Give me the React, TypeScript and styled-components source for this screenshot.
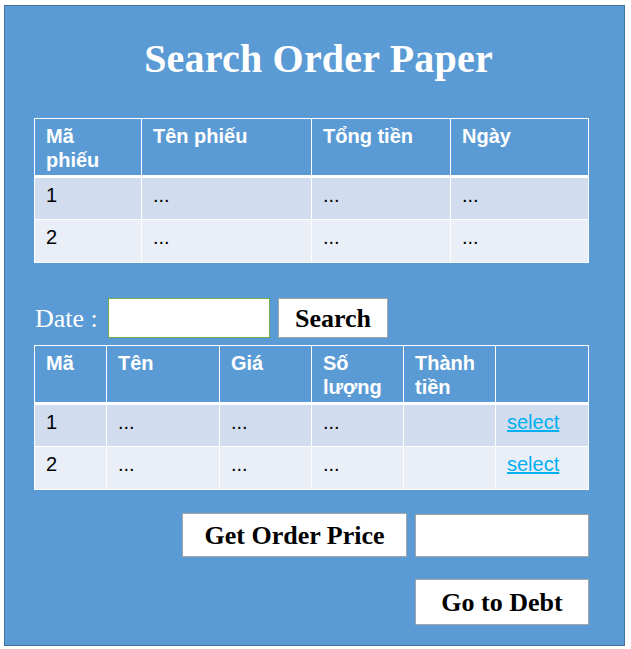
import React from "react";
import styled, { createGlobalStyle } from "styled-components";

const Global = createGlobalStyle`
  html, body { margin: 0; padding: 0; background: #ffffff; }
  * { box-sizing: border-box; }
`;

const Panel = styled.div`
  margin: 5px 0 0 4px;
  width: 621px;
  height: 641px;
  background: #5b9bd5;
  border: 1px solid #41719c;
  padding: 30px 0 0 29px;
  display: flex;
  flex-direction: column;
`;

const Title = styled.h1`
  margin: 0;
  width: 569px;
  height: 46px;
  line-height: 46px;
  text-align: center;
  font-family: "Liberation Serif", "Times New Roman", serif;
  font-weight: bold;
  font-size: 40px;
  letter-spacing: 0.2px;
  color: #ffffff;
`;

const Table = styled.div<{ $cols: string; $mt: number }>`
  margin-top: ${(p) => p.$mt}px;
  display: grid;
  grid-template-columns: ${(p) => p.$cols};
  grid-template-rows: 59px 42px 43px;
  width: 555px;
  border-top: 1px solid #ffffff;
  border-left: 1px solid #ffffff;
  font-family: "Liberation Sans", Arial, sans-serif;
  font-size: 20px;
  line-height: 24px;
`;

const HeadCell = styled.div`
  background: #5b9bd5;
  color: #ffffff;
  font-weight: bold;
  border-right: 1px solid #ffffff;
  border-bottom: 3px solid #ffffff;
  padding: 5px 8px 0 11px;
`;

const Cell = styled.div<{ $alt?: boolean }>`
  background: ${(p) => (p.$alt ? "#e9eef7" : "#d1dcee")};
  color: #000000;
  border-right: 1px solid #ffffff;
  border-bottom: 1px solid #ffffff;
  padding: 5px 8px 0 11px;
`;

const Link = styled.a`
  color: #00b0f0;
  text-decoration: underline;
  cursor: pointer;
`;

const DateRow = styled.div`
  margin-top: 35px;
  height: 40px;
  display: flex;
  align-items: center;
  gap: 8px;
`;

const Label = styled.span`
  font-family: "Liberation Serif", "Times New Roman", serif;
  font-size: 26px;
  color: #ffffff;
  margin-left: 1px;
  margin-top: 2px;
  width: 65px;
`;

const Field = styled.div<{ $w: number; $h: number; $green?: boolean }>`
  width: ${(p) => p.$w}px;
  height: ${(p) => p.$h}px;
  background: #ffffff;
  border: 1px solid ${(p) => (p.$green ? "#70ad47" : "#a5a5a5")};
`;

const Button = styled.button<{ $w: number; $h: number }>`
  width: ${(p) => p.$w}px;
  height: ${(p) => p.$h}px;
  background: #ffffff;
  border: 1px solid #a5a5a5;
  padding: 2px 0 0 0;
  font-family: "Liberation Serif", "Times New Roman", serif;
  font-weight: bold;
  font-size: 26px;
  color: #000000;
  display: flex;
  align-items: center;
  justify-content: center;
`;

const ActionRow = styled.div<{ $mt: number }>`
  margin-top: ${(p) => p.$mt}px;
  width: 555px;
  display: flex;
  justify-content: flex-end;
  align-items: flex-end;
  gap: 8px;
`;

const orders = [
  ["1", "...", "...", "..."],
  ["2", "...", "...", "..."],
];

const items = [
  ["1", "...", "...", "...", ""],
  ["2", "...", "...", "...", ""],
];

export default function App() {
  return (
    <>
      <Global />
      <Panel>
        <Title>Search Order Paper</Title>
        <Table $cols="107px 170px 139px 138px" $mt={36}>
          <HeadCell>Mã<br />phiếu</HeadCell>
          <HeadCell>Tên phiếu</HeadCell>
          <HeadCell>Tổng tiền</HeadCell>
          <HeadCell>Ngày</HeadCell>
          {orders.map((r, i) =>
            r.map((c, j) => (
              <Cell key={`${i}-${j}`} $alt={i === 1}>
                {c}
              </Cell>
            ))
          )}
        </Table>
        <DateRow>
          <Label>Date :</Label>
          <Field $w={162} $h={40} $green />
          <Button $w={110} $h={40}>Search</Button>
        </DateRow>
        <Table $cols="72px 113px 92px 92px 92px 93px" $mt={7}>
          <HeadCell>Mã</HeadCell>
          <HeadCell>Tên</HeadCell>
          <HeadCell>Giá</HeadCell>
          <HeadCell>Số<br />lượng</HeadCell>
          <HeadCell>Thành<br />tiền</HeadCell>
          <HeadCell />
          {items.map((r, i) => (
            <React.Fragment key={i}>
              {r.map((c, j) => (
                <Cell key={j} $alt={i === 1}>
                  {c}
                </Cell>
              ))}
              <Cell $alt={i === 1}>
                <Link>select</Link>
              </Cell>
            </React.Fragment>
          ))}
        </Table>
        <ActionRow $mt={23}>
          <Button $w={225} $h={44}>Get Order Price</Button>
          <Field $w={174} $h={43} />
        </ActionRow>
        <ActionRow $mt={22}>
          <Button $w={174} $h={46}>Go to Debt</Button>
        </ActionRow>
      </Panel>
    </>
  );
}
